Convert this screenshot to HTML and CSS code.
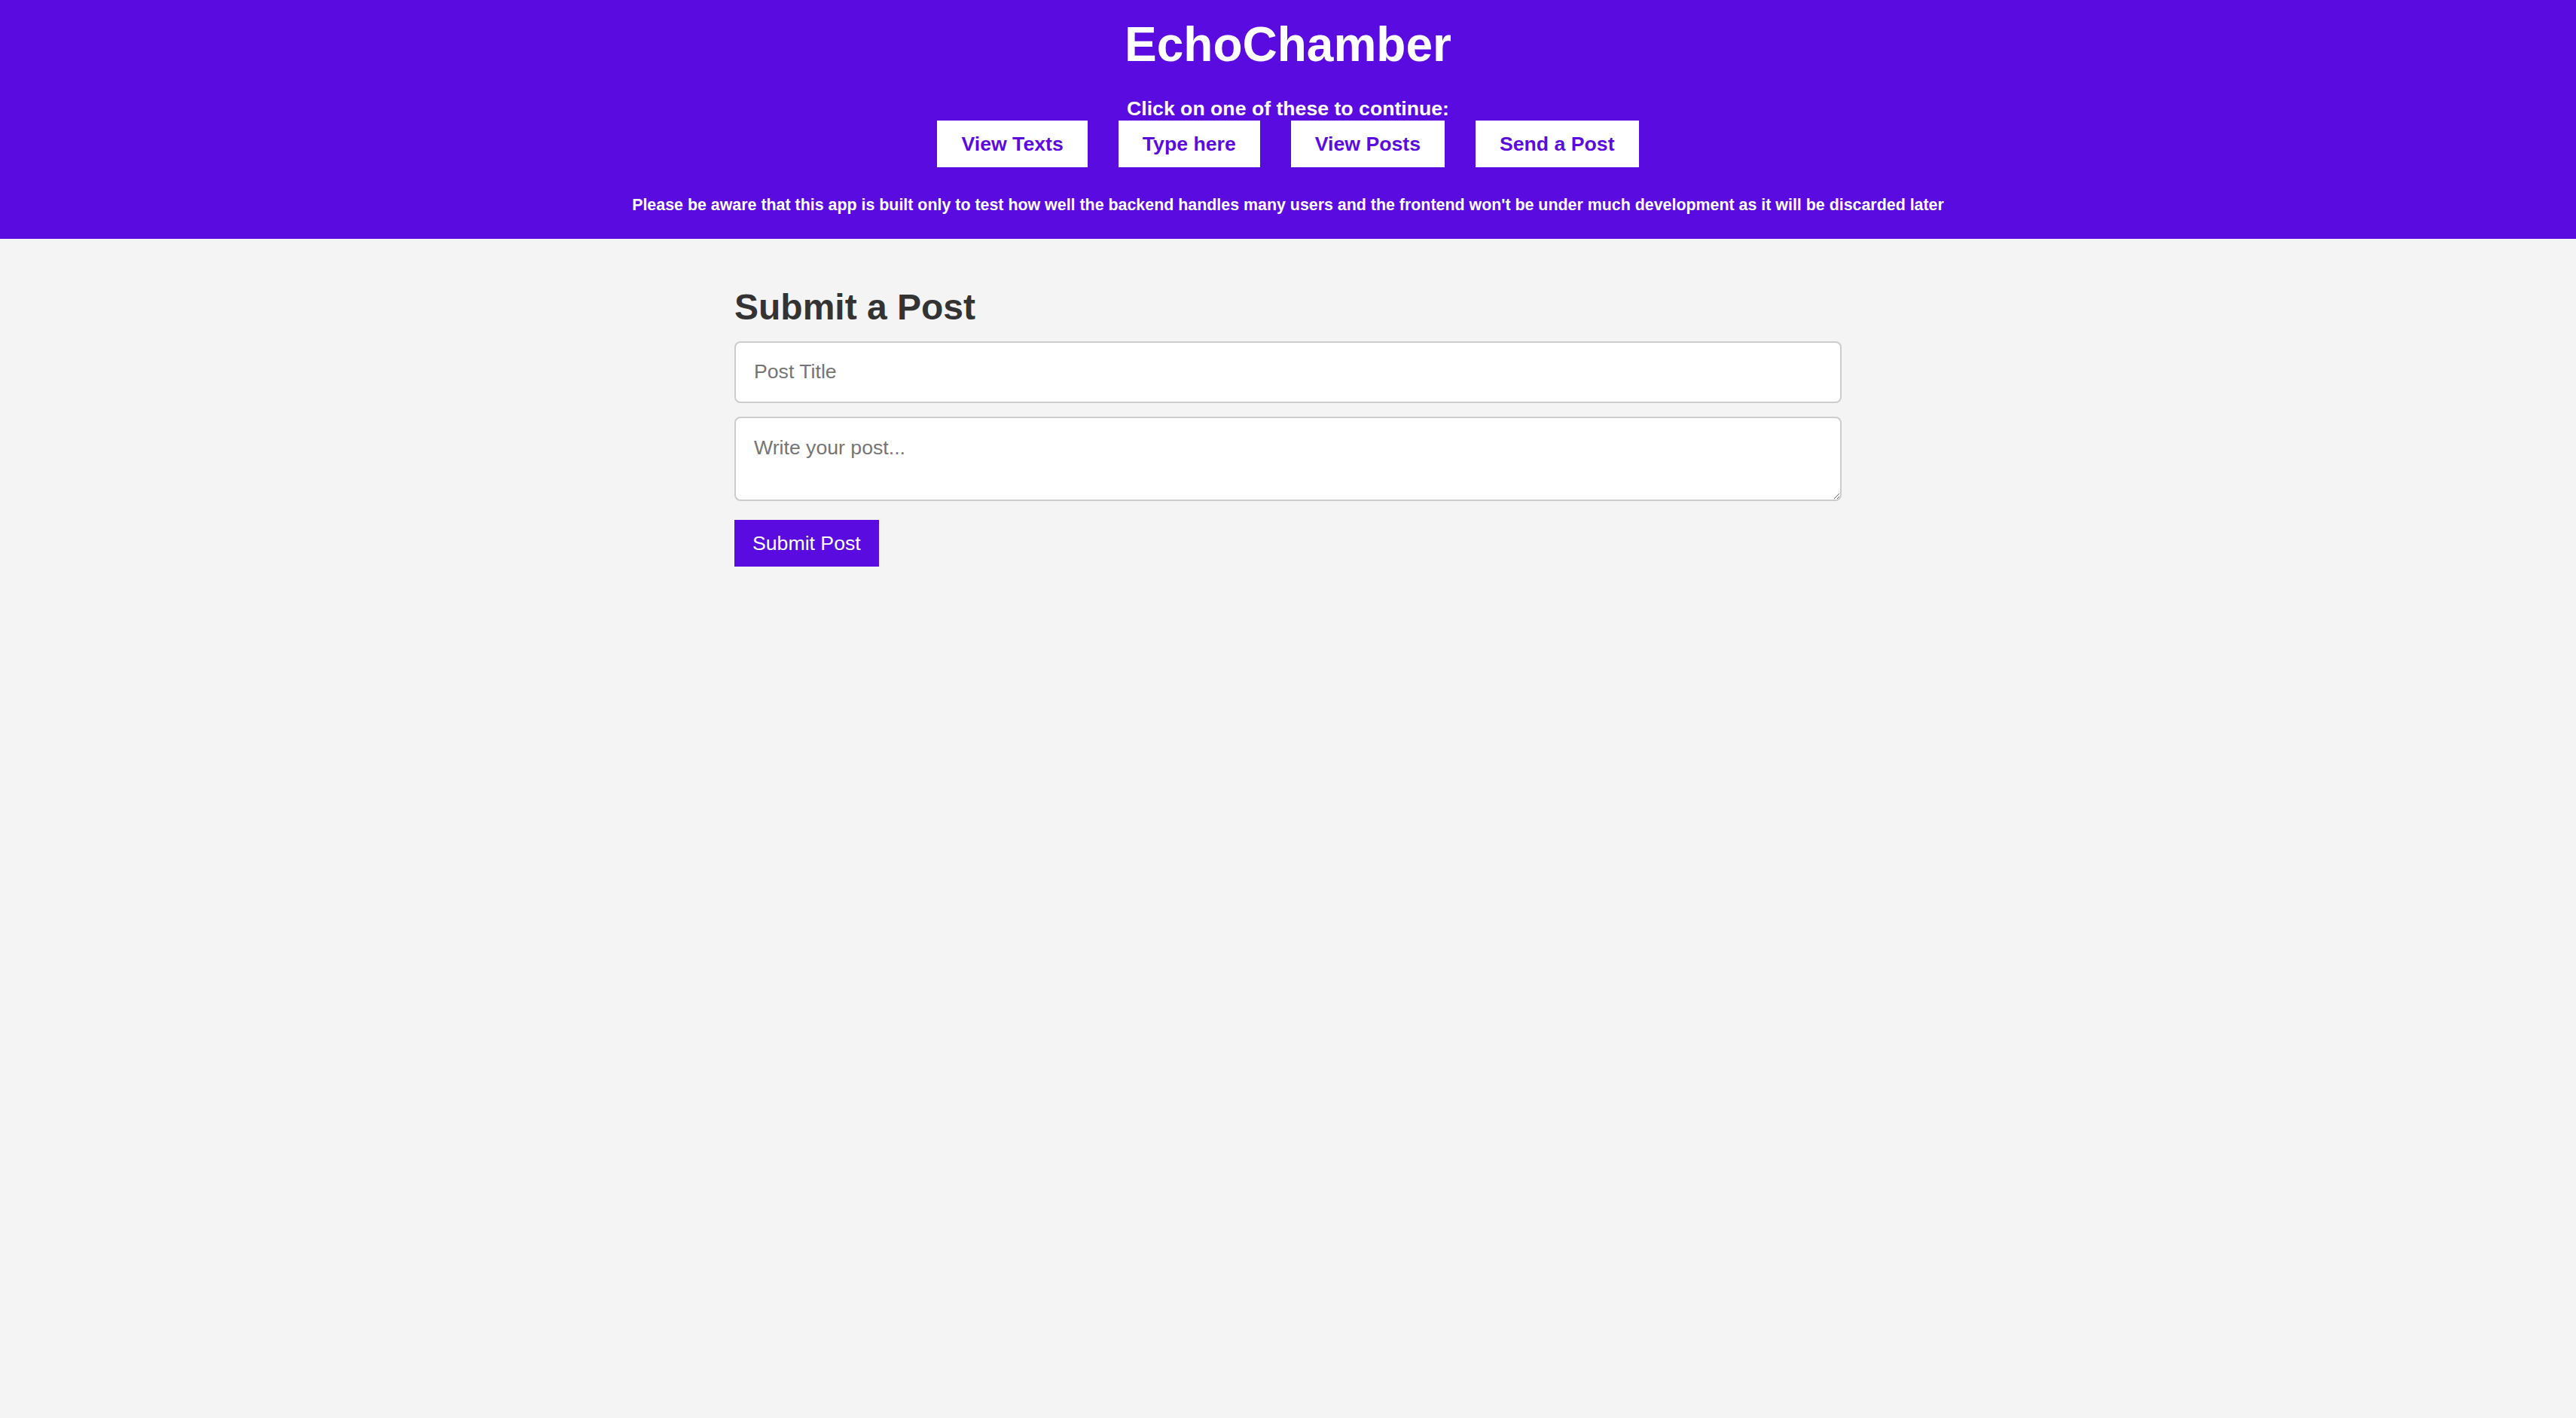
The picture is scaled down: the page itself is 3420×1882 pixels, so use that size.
FILE: index.html
```
<!DOCTYPE html>
<html lang="en">
<head>
<meta charset="utf-8">
<title>EchoChamber</title>
<link rel="stylesheet" href="styles.css">
</head>
<body>
<header class="site-header">
  <h1 class="site-title">EchoChamber</h1>
  <p class="nav-label">Click on one of these to continue:</p>
  <nav class="nav-buttons">
    <button class="nav-btn">View Texts</button>
    <button class="nav-btn">Type here</button>
    <button class="nav-btn">View Posts</button>
    <button class="nav-btn">Send a Post</button>
  </nav>
  <p class="disclaimer">Please be aware that this app is built only to test how well the backend handles many users and the frontend won't be under much development as it will be discarded later</p>
</header>
<main class="content">
  <h2 class="form-title">Submit a Post</h2>
  <form class="post-form">
    <input class="field field-title" type="text" placeholder="Post Title">
    <textarea class="field field-body" placeholder="Write your post..."></textarea>
    <button class="submit-btn" type="button">Submit Post</button>
  </form>
</main>
</body>
</html>
```
FILE: styles.css
```
html, body {
  margin: 0;
  padding: 0;
}
body {
  background: #f4f4f4;
  font-family: "Liberation Sans", Arial, Helvetica, sans-serif;
  color: #333;
  min-height: 1882px;
}
.site-header {
  background: #5a0ce0;
  color: #fff;
  text-align: center;
  padding: 24px 0 32.5px;
}
.site-title {
  margin: 0;
  font-size: 64px;
  font-weight: bold;
  line-height: 71.5px;
}
.nav-label {
  margin: 33.5px 0 0;
  font-size: 26.67px;
  font-weight: bold;
  line-height: 30.7px;
}
.nav-buttons {
  display: flex;
  justify-content: center;
  gap: 41px;
}
.nav-btn {
  background: #fff;
  color: #5a0ce0;
  border: none;
  border-radius: 0;
  font-family: "Liberation Sans", Arial, Helvetica, sans-serif;
  font-size: 26.67px;
  font-weight: bold;
  line-height: 30.7px;
  padding: 16px 32px;
  margin: 0;
  cursor: pointer;
}
.disclaimer {
  margin: 37.5px 0 0;
  font-size: 21.4px;
  font-weight: bold;
  line-height: 24.6px;
}
.content {
  width: 1470px;
  margin: 0 auto;
  padding-top: 64px;
}
.form-title {
  margin: 0 0 18px;
  font-size: 48px;
  font-weight: bold;
  line-height: 53.6px;
  color: #333;
}
.post-form {
  display: flex;
  flex-direction: column;
  align-items: flex-start;
}
.field {
  box-sizing: border-box;
  width: 100%;
  border: 2px solid #ccc;
  border-radius: 8px;
  background: #fff;
  font-family: "Liberation Sans", Arial, Helvetica, sans-serif;
  font-size: 26.67px;
  color: #333;
  padding: 24px;
  margin: 0;
  outline: none;
}
.field::placeholder {
  color: #757575;
}
.field-title {
  height: 82px;
  line-height: 30.7px;
}
.field-body {
  height: 112px;
  line-height: 30.7px;
  margin-top: 18px;
  resize: vertical;
  display: block;
}
.submit-btn {
  margin-top: 25px;
  background: #5a0ce0;
  color: #fff;
  border: none;
  border-radius: 0;
  font-family: "Liberation Sans", Arial, Helvetica, sans-serif;
  font-size: 26.67px;
  line-height: 30.7px;
  padding: 16px 24px;
  cursor: pointer;
}
```
